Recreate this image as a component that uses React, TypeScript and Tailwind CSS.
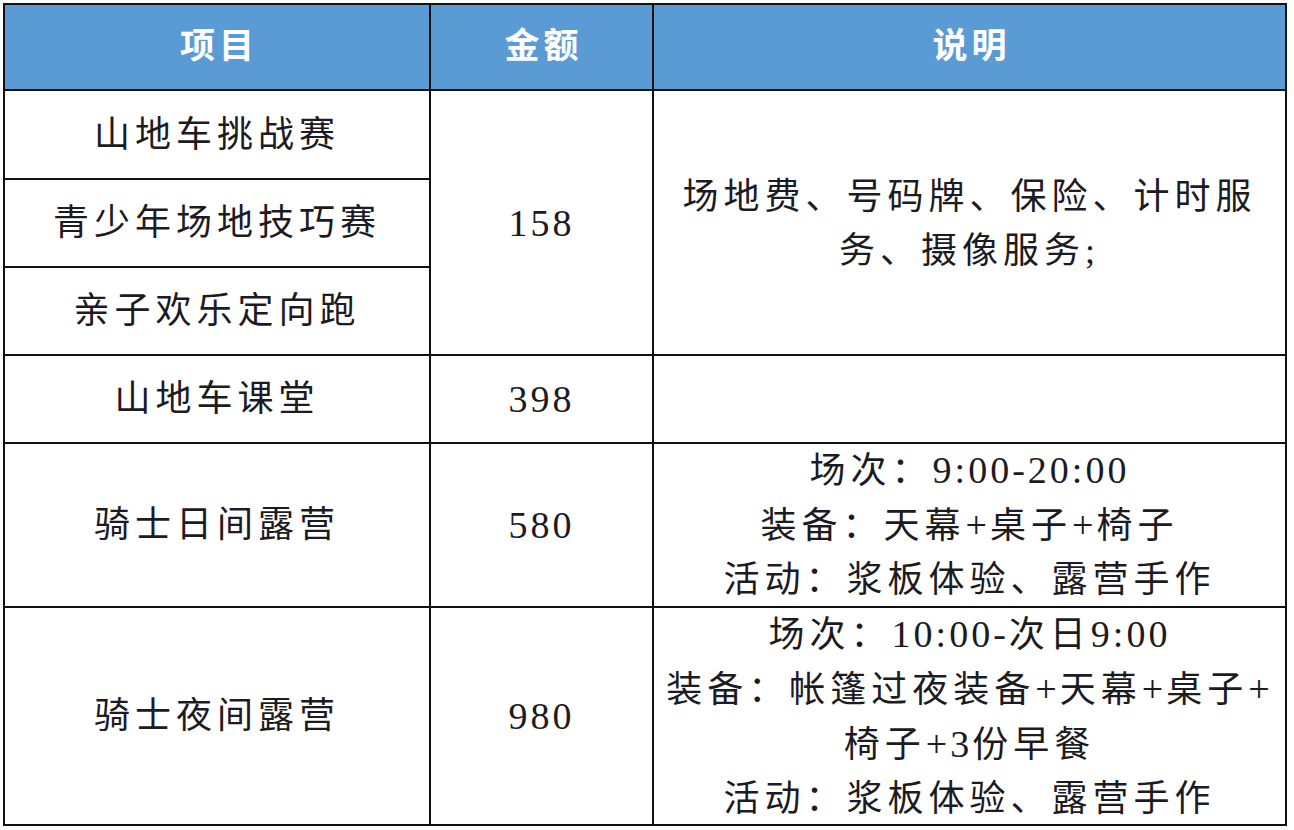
import React from "react";

const FONT = { fontFamily: '"Liberation Serif", "Noto Sans CJK SC", serif' };

function A({ children }: { children: React.ReactNode }) {
  return <span className="text-[38px] tracking-[3px]">{children}</span>;
}

function Cell({
  children,
  className = "",
}: {
  children?: React.ReactNode;
  className?: string;
}) {
  return (
    <div
      className={
        "bg-white flex flex-col items-center justify-center text-center text-[36px] leading-[54px] tracking-[5px] text-[#1c1a22] " +
        className
      }
    >
      {children}
    </div>
  );
}

function Head({ children }: { children: React.ReactNode }) {
  return (
    <div className="bg-[#5b9bd5] flex items-center justify-center text-white font-bold text-[35px] tracking-[4px] pl-[4px]">
      {children}
    </div>
  );
}

export default function App() {
  return (
    <div className="w-[1294px] h-[830px] bg-white pt-[3px] pl-[3px]" style={FONT}>
      <div className="w-[1284px] h-[823px] bg-[#111] p-[2px] grid grid-cols-[424px_221px_631px] grid-rows-[84px_87px_86px_86px_86px_162px_216px] gap-[2px]">
        <Head>项目</Head>
        <Head>金额</Head>
        <Head>说明</Head>

        <Cell className="col-start-1 row-start-2">山地车挑战赛</Cell>
        <Cell className="col-start-1 row-start-3">青少年场地技巧赛</Cell>
        <Cell className="col-start-1 row-start-4">亲子欢乐定向跑</Cell>
        <Cell className="col-start-2 row-start-2 row-span-3">
          <A>158</A>
        </Cell>
        <Cell className="col-start-3 row-start-2 row-span-3 pt-[2px]">
          <div>场地费、号码牌、保险、计时服</div>
          <div>务、摄像服务;</div>
        </Cell>

        <Cell className="col-start-1 row-start-5">山地车课堂</Cell>
        <Cell className="col-start-2 row-start-5">
          <A>398</A>
        </Cell>
        <Cell className="col-start-3 row-start-5" />

        <Cell className="col-start-1 row-start-6">骑士日间露营</Cell>
        <Cell className="col-start-2 row-start-6">
          <A>580</A>
        </Cell>
        <Cell className="col-start-3 row-start-6">
          <div>
            场次：<A>9:00-20:00</A>
          </div>
          <div>
            装备：天幕<A>+</A>桌子<A>+</A>椅子
          </div>
          <div>活动：浆板体验、露营手作</div>
        </Cell>

        <Cell className="col-start-1 row-start-7">骑士夜间露营</Cell>
        <Cell className="col-start-2 row-start-7">
          <A>980</A>
        </Cell>
        <Cell className="col-start-3 row-start-7 leading-[53px]">
          <div>
            场次：<A>10:00-</A>次日<A>9:00</A>
          </div>
          <div>
            装备：帐篷过夜装备<A>+</A>天幕<A>+</A>桌子<A>+</A>
          </div>
          <div>
            椅子<A>+3</A>份早餐
          </div>
          <div>活动：浆板体验、露营手作</div>
        </Cell>
      </div>
    </div>
  );
}
